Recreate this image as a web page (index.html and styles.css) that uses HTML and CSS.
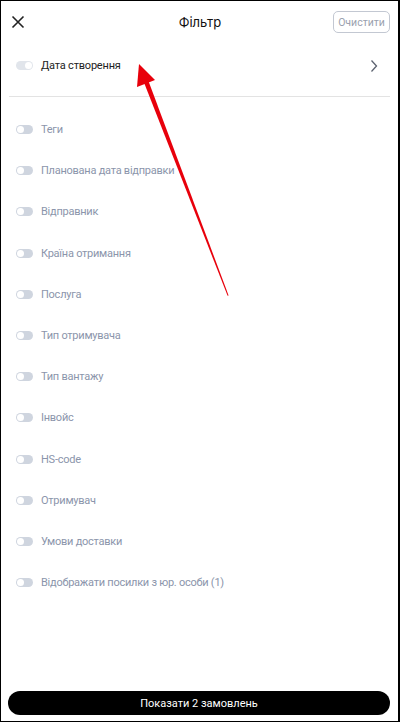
FILE: index.html
```html
<!DOCTYPE html>
<html lang="uk">
<head>
    <meta charset="UTF-8">
    <meta name="viewport" content="width=device-width, initial-scale=1.0">
    <title>Фільтр</title>
    <link rel="stylesheet" href="styles.css">
</head>
<body>
    <div class="screen">
        <div class="header">
            <button class="close-button" aria-label="Закрити">
                <svg width="14" height="14" viewBox="0 0 14 14"><path d="M1.5 1.5 L12.5 12.5 M12.5 1.5 L1.5 12.5" stroke="#222" stroke-width="1.6" fill="none"/></svg>
            </button>
            <h1 class="title">Фільтр</h1>
            <button class="clear-button">Очистити</button>
        </div>

        <div class="main-row">
            <span class="toggle toggle-on"></span>
            <span class="main-label">Дата створення</span>
            <svg class="chevron" width="10" height="14" viewBox="0 0 10 14"><path d="M2.5 1.5 L7.5 7 L2.5 12.5" stroke="#5c6270" stroke-width="1.3" fill="none"/></svg>
        </div>

        <ul class="filters">
            <li><span class="toggle"></span>Теги</li>
            <li><span class="toggle"></span>Планована дата відправки</li>
            <li><span class="toggle"></span>Відправник</li>
            <li><span class="toggle"></span>Країна отримання</li>
            <li><span class="toggle"></span>Послуга</li>
            <li><span class="toggle"></span>Тип отримувача</li>
            <li><span class="toggle"></span>Тип вантажу</li>
            <li><span class="toggle"></span>Інвойс</li>
            <li><span class="toggle"></span>HS-code</li>
            <li><span class="toggle"></span>Отримувач</li>
            <li><span class="toggle"></span>Умови доставки</li>
            <li><span class="toggle"></span>Відображати посилки з юр. особи (1)</li>
        </ul>

        <div class="footer">
            <button class="show-button">Показати 2 замовлень</button>
        </div>

        <!-- annotation arrow drawn over the screen -->
        <svg class="arrow" width="400" height="722" viewBox="0 0 400 722">
            <path d="M228.6 295.5 L227.6 295.8 L143.2 80.5 L147.6 78.8 Z" fill="#e8000b"/>
            <path d="M139 64 L137 87 L155 80 Z" fill="#e8000b"/>
        </svg>
    </div>
</body>
</html>
```

FILE: styles.css
```css
* {
    box-sizing: border-box;
}

body {
    margin: 0;
    padding: 0;
    background-color: #fff;
    font-family: Roboto, "Noto Sans", sans-serif;
}

.screen {
    position: relative;
    width: 400px;
    height: 722px;
    border: 1px solid #000;
    border-right-width: 2px;
    display: flex;
    flex-direction: column;
}

.header {
    display: flex;
    align-items: center;
    justify-content: space-between;
    height: 42px;
    padding: 0 8px 0 10px;
}

.close-button {
    background: none;
    border: none;
    padding: 0;
    width: 14px;
    height: 14px;
    display: flex;
}

.title {
    margin: 0;
    font-family: Inter, sans-serif;
    font-size: 13px;
    font-weight: 400;
    color: #111;
    padding-left: 42px;
}

.clear-button {
    background: #fff;
    border: 1px solid #c3c8d2;
    border-radius: 5px;
    color: #9aa1ae;
    font-family: inherit;
    font-size: 10.5px;
    height: 22px;
    width: 57px;
    padding: 0;
}

.main-row {
    display: flex;
    align-items: center;
    margin: 0 8px;
    padding: 0 7px 8px 7px;
    border-bottom: 1px solid #e3e3e3;
    height: 54px;
}

.main-label {
    flex: 1;
    font-size: 11px;
    letter-spacing: -0.2px;
    color: #222;
}

.chevron {
    margin-right: 4px;
}

.toggle {
    position: relative;
    display: inline-block;
    width: 17px;
    height: 9px;
    border-radius: 5px;
    background-color: #cfd5df;
    margin-right: 8px;
    flex-shrink: 0;
}

.toggle::after {
    content: "";
    position: absolute;
    top: 1px;
    left: 1px;
    width: 7px;
    height: 7px;
    border-radius: 50%;
    background-color: #fff;
}

.toggle-on {
    background-color: #e1e5eb;
}

.toggle-on::after {
    left: 9px;
}

.filters {
    list-style: none;
    margin: 0;
    padding: 12px 0 0 15px;
    flex: 1;
}

.filters li {
    display: flex;
    align-items: center;
    height: 41.2px;
    font-size: 11px;
    letter-spacing: -0.25px;
    color: #8b95ab;
}

.footer {
    padding: 0 8px 6px 7px;
}

.show-button {
    width: 100%;
    height: 24px;
    border: none;
    border-radius: 12px;
    background-color: #000;
    color: #fff;
    font-family: inherit;
    font-size: 11px;
}

.arrow {
    position: absolute;
    top: -1px;
    left: -1px;
    pointer-events: none;
}
```
